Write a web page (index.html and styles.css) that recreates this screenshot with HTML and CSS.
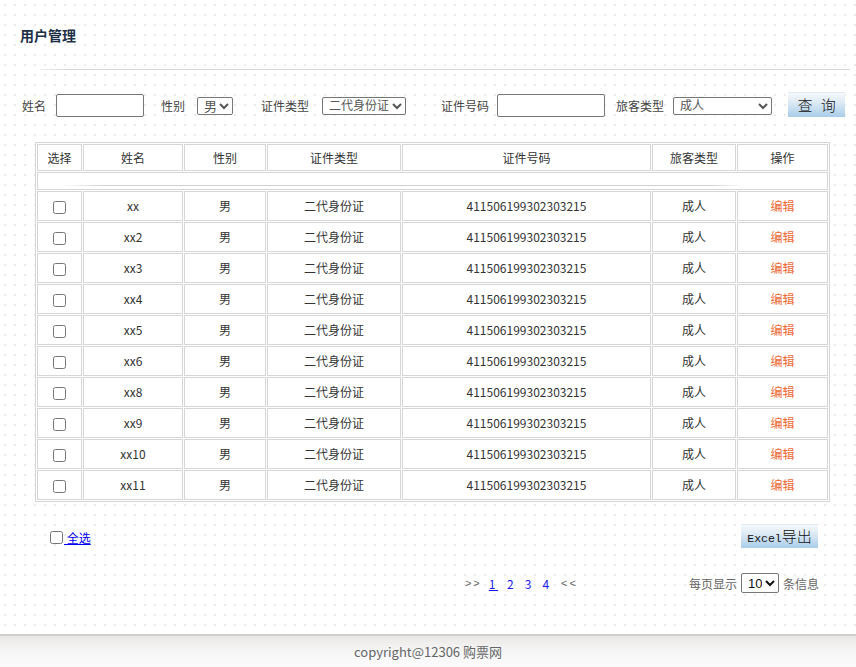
FILE: index.html
```html
<!DOCTYPE html>
<html lang="zh-CN">
<head>
<meta charset="utf-8">
<title>用户管理</title>
<link rel="stylesheet" href="styles.css">
</head>
<body>
<div class="page">
  <div class="title">用户管理</div>
  <div class="divider"></div>

  <form class="search">
    <label class="lbl lbl-name">姓名</label>
    <input class="txt txt-name" type="text">
    <label class="lbl lbl-sex">性别</label>
    <select class="sel sel-sex"><option>男</option><option>女</option></select>
    <label class="lbl lbl-type">证件类型</label>
    <select class="sel sel-type"><option>二代身份证</option></select>
    <label class="lbl lbl-no">证件号码</label>
    <input class="txt txt-no" type="text">
    <label class="lbl lbl-kind">旅客类型</label>
    <select class="sel sel-kind"><option>成人</option></select>
    <button type="button" class="btn btn-query">查 询</button>
  </form>

  <table class="grid">
    <colgroup>
      <col class="c1"><col class="c2"><col class="c3"><col class="c4"><col class="c5"><col class="c6"><col class="c7">
    </colgroup>
    <thead>
      <tr><th>选择</th><th>姓名</th><th>性别</th><th>证件类型</th><th>证件号码</th><th>旅客类型</th><th>操作</th></tr>
    </thead>
    <tbody>
      <tr class="sep"><td colspan="7"><div class="sep-line"></div></td></tr>
      <tr><td><input type="checkbox"></td><td>xx</td><td>男</td><td>二代身份证</td><td>411506199302303215</td><td>成人</td><td><a class="edit">编辑</a></td></tr>
      <tr><td><input type="checkbox"></td><td>xx2</td><td>男</td><td>二代身份证</td><td>411506199302303215</td><td>成人</td><td><a class="edit">编辑</a></td></tr>
      <tr><td><input type="checkbox"></td><td>xx3</td><td>男</td><td>二代身份证</td><td>411506199302303215</td><td>成人</td><td><a class="edit">编辑</a></td></tr>
      <tr><td><input type="checkbox"></td><td>xx4</td><td>男</td><td>二代身份证</td><td>411506199302303215</td><td>成人</td><td><a class="edit">编辑</a></td></tr>
      <tr><td><input type="checkbox"></td><td>xx5</td><td>男</td><td>二代身份证</td><td>411506199302303215</td><td>成人</td><td><a class="edit">编辑</a></td></tr>
      <tr><td><input type="checkbox"></td><td>xx6</td><td>男</td><td>二代身份证</td><td>411506199302303215</td><td>成人</td><td><a class="edit">编辑</a></td></tr>
      <tr><td><input type="checkbox"></td><td>xx8</td><td>男</td><td>二代身份证</td><td>411506199302303215</td><td>成人</td><td><a class="edit">编辑</a></td></tr>
      <tr><td><input type="checkbox"></td><td>xx9</td><td>男</td><td>二代身份证</td><td>411506199302303215</td><td>成人</td><td><a class="edit">编辑</a></td></tr>
      <tr><td><input type="checkbox"></td><td>xx10</td><td>男</td><td>二代身份证</td><td>411506199302303215</td><td>成人</td><td><a class="edit">编辑</a></td></tr>
      <tr><td><input type="checkbox"></td><td>xx11</td><td>男</td><td>二代身份证</td><td>411506199302303215</td><td>成人</td><td><a class="edit">编辑</a></td></tr>
    </tbody>
  </table>

  <div class="actions">
    <div class="select-all"><input type="checkbox"><a href="#" class="all-link">&nbsp;全选</a></div>
    <button type="button" class="btn btn-excel"><span class="latin">Excel</span>导出</button>
  </div>

  <div class="pager">
    <div class="pages">
      <span class="arrow">&gt;&gt;</span>
      <a href="#" class="pg pg-cur">1&nbsp;</a>
      <a href="#" class="pg">2</a>
      <a href="#" class="pg">3</a>
      <a href="#" class="pg">4</a>
      <span class="arrow arrow-end">&lt;&lt;</span>
    </div>
    <div class="per-page">
      <span>每页显示</span>
      <select class="sel sel-size"><option>10</option><option>20</option></select>
      <span>条信息</span>
    </div>
  </div>
</div>

<footer class="footer">copyright@12306 购票网</footer>
</body>
</html>
```

FILE: styles.css
```css
html, body {
  margin: 0;
  padding: 0;
}

body {
  width: 856px;
  height: 667px;
  overflow: hidden;
  font-family: "Noto Sans CJK SC", "Noto Sans", sans-serif;
  font-size: 12px;
  color: #333;
  background-color: #fff;
  background-image: radial-gradient(circle at 5px 5px, #e4e4e4 0.6px, transparent 1px);
  background-size: 10px 10px;
}

.page {
  height: 634px;
}

.title {
  padding: 27px 0 0 20px;
  font-size: 14px;
  line-height: 16px;
  font-weight: bold;
  color: #1c2f45;
}

.divider {
  margin: 26px 6px 0 40px;
  height: 1px;
  background: linear-gradient(to right, #eee 0, #d6d6d6 30px, #d6d6d6 100%);
}

/* search bar */
.search {
  display: flex;
  align-items: center;
  height: 27px;
  margin: 22px 0 0 22px;
  padding: 0;
}

.lbl {
  font-size: 12px;
  color: #444;
  line-height: 16px;
}

.lbl-name { margin-right: 10px; }
.lbl-sex { margin: 0 12px 0 17px; }
.lbl-type { margin: 0 13px 0 28px; }
.lbl-no { margin: 0 8px 0 35px; }
.lbl-kind { margin: 0 9px 0 11px; }

.txt {
  box-sizing: border-box;
  height: 23px;
  border: 1px solid #767676;
  border-radius: 2px;
  background: #fff;
  padding: 0 3px;
  margin: 0;
  font-size: 12px;
}

.txt-name { width: 88px; }
.txt-no { width: 108px; }

.sel {
  box-sizing: border-box;
  height: 18px;
  border: 1px solid #767676;
  border-radius: 2px;
  background-color: #fff;
  color: #555;
  font-family: "Liberation Sans", "Noto Sans CJK SC", sans-serif;
  font-size: 12px;
  line-height: 14px;
  padding: 0 0 0 2px;
  margin: 0;
}

.sel-sex { width: 36px; font-size: 13px; }
.sel-type { width: 84px; }
.sel-kind { width: 99px; }

.btn {
  box-sizing: border-box;
  border: 0;
  border-top: 1px solid #e2ebf3;
  background: linear-gradient(to bottom, #f6f9fc 0%, #dce9f4 40%, #a9cde9 100%);
  color: #111;
  padding: 0;
  margin: 0;
  cursor: pointer;
  font-family: "Noto Sans CJK SC", sans-serif;
  font-weight: normal;
}

.btn-query {
  width: 57px;
  height: 25px;
  margin-left: 16px;
  font-size: 15px;
  line-height: 22px;
  word-spacing: 5px;
  margin-top: -2px;
  font-weight: 300;
}

/* table */
.grid {
  width: 795px;
  margin: 23px 0 0 35px;
  table-layout: fixed;
  border-collapse: separate;
  border-spacing: 1px;
  border: 1px solid #d6d6d6;
  background: #fff;
}

.c1 { width: 45px; }
.c2 { width: 100px; }
.c3 { width: 82px; }
.c4 { width: 134px; }
.c5 { width: 249px; }
.c6 { width: 84px; }
.c7 { width: 91px; }

.grid th,
.grid td {
  border: 1px solid #d6d6d6;
  padding: 0;
  text-align: center;
  font-size: 12px;
  font-weight: normal;
  color: #333;
}

.grid th {
  line-height: 25px;
  height: 25px;
}

.grid td {
  line-height: 28px;
  height: 28px;
}

.grid td input[type="checkbox"] {
  margin: 0;
  vertical-align: middle;
  width: 13px;
  height: 13px;
}

.grid tr.sep td {
  height: 16px;
  line-height: 16px;
}

.sep-line {
  margin: 9px 83px 0 25px;
  height: 1px;
  background: linear-gradient(to right, rgba(200,200,200,0) 0, #d0d0d0 40px, #d0d0d0 95%, rgba(200,200,200,0) 100%);
}

.edit {
  color: #ec6a35;
  cursor: pointer;
}

/* actions row */
.actions {
  width: 795px;
  box-sizing: border-box;
  margin: 22px 0 0 35px;
  padding: 0 12px 0 15px;
  height: 24px;
  display: flex;
  align-items: center;
  justify-content: space-between;
}

.select-all {
  display: flex;
  align-items: center;
  margin-top: 3px;
}

.select-all input {
  margin: 0 1px 0 0;
  width: 13px;
  height: 13px;
}

.all-link {
  color: #0000ee;
  font-size: 12px;
  text-decoration: underline;
}

.btn-excel {
  width: 77px;
  height: 24px;
  font-size: 15px;
  line-height: 22px;
  font-weight: 300;
}

.latin {
  font-family: "Liberation Mono", monospace;
  font-size: 11.5px;
  font-weight: normal;
}

/* pager */
.pager {
  width: 795px;
  box-sizing: border-box;
  margin: 25px 0 0 35px;
  padding-right: 11px;
  height: 20px;
  display: flex;
  align-items: center;
  justify-content: flex-end;
  font-size: 12px;
}

.pages {
  display: flex;
  align-items: center;
  margin-right: 111px;
}

.arrow {
  color: #666;
  letter-spacing: 2px;
  font-family: "Liberation Sans", sans-serif;
  font-size: 11px;
  margin-right: 7px;
}

.arrow-end {
  margin: 0 0 0 1px;
}

.pg {
  color: #1a1aee;
  text-decoration: none;
  margin-right: 11px;
  font-size: 12px;
}

.pg-cur {
  text-decoration: underline;
  margin-right: 9px;
}

.per-page {
  display: flex;
  align-items: center;
  color: #666;
}

.sel-size {
  width: 38px;
  height: 20px;
  margin: 0 4px;
  font-size: 13px;
  color: #111;
}

/* footer */
.footer {
  box-sizing: border-box;
  height: 33px;
  border-top: 2px solid #cfcfcf;
  background: linear-gradient(to bottom, #e9e7e6 0, #efeeed 6px, #f6f6f6 16px, #fbfbfb 100%);
  text-align: center;
  line-height: 31px;
  font-size: 13px;
  color: #666;
}
```
